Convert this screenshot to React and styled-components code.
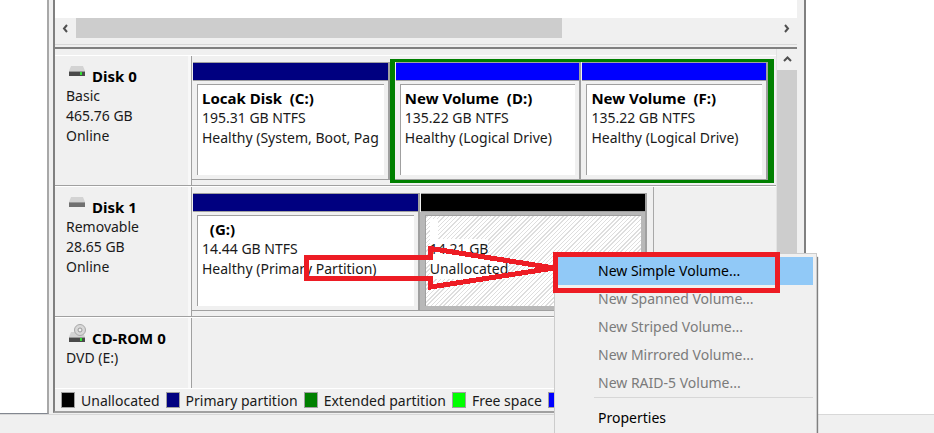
import React, { useState } from 'react';
import styled, { createGlobalStyle } from 'styled-components';

const GlobalStyle = createGlobalStyle`
    *{
        box-sizing: border-box;
    }
    body{
        margin: 0;
        background-color: white;
        color: #1a1a1a;
        font-family: "Noto Sans", "Open Sans", sans-serif;
        font-size: 14px;
        line-height: 20px;
    }
    button{
        padding: 0;
        border: 0;
        background: none;
        color: inherit;
        font: inherit;
    }
`;

const Page = styled.div`
    position: relative;
    display: flex;
    flex-direction: column;
    height: 100vh;
    overflow: hidden;
`;

const Main = styled.main`
    display: flex;
`;

const TreePane = styled.aside`
    flex: 0 0 49px;
    border-right: 2px solid #a8a8a8;
    border-bottom: 1px solid #828790;
`;

const ActionsPane = styled.aside`
    flex: 0 0 128px;
`;

const Console = styled.section`
    flex: 1;
    min-width: 0;
    padding: 0 7px 1px 4px;
    background-color: #f0f0f0;
    border-right: 2px solid #808080;
`;

const ConsoleInner = styled.div`
    border-left: 2px solid #808080;
    border-bottom: 2px solid #a0a0a0;
`;

const VolumeList = styled.div`
    height: 18px;
    background-color: white;
`;

const HorizontalScroll = styled.div`
    display: flex;
    height: 20px;
`;

const VerticalScroll = styled.div`
    display: flex;
    flex-direction: column;
    flex: 0 0 20px;
`;

const ScrollButton = styled.button`
    display: flex;
    align-items: center;
    justify-content: center;
    flex: 0 0 21px;
`;

const Track = styled.div`
    display: flex;
    flex: 1;
`;

const Thumb = styled.div`
    flex: ${props => props.$size};
    background-color: #cdcdcd;
`;

const Splitter = styled.div`
    height: 11px;
    border-bottom: 2px solid #808080;
    &::before{
        content: "";
        display: block;
        height: 6px;
        border-bottom: 1px solid #d8d8d8;
    }
`;

const DiskView = styled.div`
    display: flex;
`;

const DiskList = styled.div`
    flex: 1;
    min-width: 0;
    padding-top: 6px;
    border-right: 1px solid #e3e3e3;
`;

const DiskRow = styled.div`
    display: flex;
    min-height: ${props => props.$short ? 71 : 131}px;
    border-top: 1px solid white;
    border-bottom: ${props => props.$short ? 0 : 1}px solid #a0a0a0;
`;

const DiskLabel = styled.div`
    flex: 0 0 137px;
    padding: 10px 0 0 11px;
    border-right: 1px solid #a0a0a0;
    box-shadow: inset -3px 0 #f8f8f8;
`;

const DiskTitle = styled.div`
    display: flex;
    gap: 6px;
    color: black;
    font-size: 15px;
    font-weight: bold;
    svg{
        flex: none;
        margin: ${props => props.$disc ? -5 : -9}px 0 0 2px;
    }
`;

const Volumes = styled.div`
    display: flex;
    flex: ${props => props.$size || 1};
    min-width: 0;
    padding: ${props => props.$bounded ? '6px 6px 5px 0' : '6px 0 5px'};
    border-right: ${props => props.$bounded ? '1px solid #a8a8a8' : '0'};
`;

const Spacer = styled.div`
    flex: ${props => props.$size};
`;

const Extended = styled.div`
    display: flex;
    flex: ${props => props.$size};
    min-width: 0;
    margin: -3px 2px -3px 0;
    border: solid #008000;
    border-width: 3px 6px 3px 5px;
`;

const VolumeBox = styled.div`
    display: flex;
    flex-direction: column;
    flex: ${props => props.$size};
    min-width: 0;
    border-right: 2px solid #a0a0a0;
    border-bottom: 1px solid #a0a0a0;
`;

const Bar = styled.div`
    height: 19px;
    margin-left: 1px;
    background-color: ${props => props.$color};
    border: solid #a0a0a0;
    border-width: 1px 0;
`;

const VolumeBody = styled.div`
    flex: 1;
    padding: 4px 0 0 5px;
    overflow: hidden;
    white-space: nowrap;
    color: #1a1a1a;
    background: ${props => props.$hatched
        ? 'repeating-linear-gradient(135deg, white 0 2px, #dedede 2px 3px)'
        : 'white'};
    border: solid ${props => props.$hatched ? '#b8b8b8' : '#f0f0f0'};
    border-width: 3px 4px 4px 5px;
    box-shadow: inset 1px 1px #a0a0a0;
    span{
        display: inline-block;
        background-color: white;
    }
`;

const VolumeName = styled.div`
    height: 20px;
    color: black;
    font-size: 15px;
    font-weight: bold;
    white-space: pre;
`;

const Legend = styled.ul`
    display: flex;
    gap: 6px;
    height: 23px;
    margin: 0;
    padding: 2px 0 0 6px;
    list-style: none;
    border-top: 1px solid white;
    li{
        display: flex;
        gap: 6px;
        white-space: nowrap;
    }
`;

const Swatch = styled.span`
    width: 14px;
    height: 16px;
    margin-top: 1px;
    background-color: ${props => props.$color};
    border: 1px solid #a0a0a0;
`;

const StatusBar = styled.footer`
    flex: 1;
    background-color: #f0f0f0;
    border-top: 1px solid #d8d8d8;
`;

const ContextMenu = styled.div`
    position: absolute;
    left: 554px;
    top: 253px;
    display: flex;
    flex-direction: column;
    width: 263px;
    padding: 3px;
    background-color: #f0f0f0;
    border: 1px solid #cccccc;
    box-shadow: 1px 4px 1px #808080;
`;

const MenuItem = styled.button`
    height: 28px;
    padding-left: 40px;
    text-align: left;
    color: black;
    background-color: ${props => props.$active ? '#91c9f7' : 'transparent'};
    &:disabled{
        color: #7b7b7b;
    }
`;

const MenuDivider = styled.hr`
    width: 100%;
    margin: 0 0 6px;
    border: 0;
    padding-left: 36px;
    height: 1px;
    background-color: #d7d7d7;
    background-clip: content-box;
`;

const Annotation = styled.svg`
    position: absolute;
    left: 300px;
    top: 240px;
    pointer-events: none;
`;

const Chevron = ({ direction }) => {
    const paths = {
        left: 'M6 1 L3 4.500 L6 8',
        right: 'M3 1 L6 4.500 L3 8',
        up: 'M1 6 L4.500 2.500 L8 6',
    };
    return (
        <svg width="9" height="9" fill="none" stroke="#505050" strokeWidth="2">
            <path d={paths[direction]} />
        </svg>
    );
};

const DriveIcon = ({ light, disc }) => (
    <svg width="18" height="21" viewBox="0 0 18 21">
        <path d="M3 9 H15 L17 14 H1 Z" fill="#d3d3d3" />
        {disc && (
            <g>
                <circle cx="12" cy="7" r="5.500" fill="#d8d8d8" stroke="#a8a8a8" />
                <circle cx="12" cy="7" r="2" fill="#f0f0f0" stroke="#999999" />
            </g>
        )}
        <rect x="1" y="14" width="16" height="5" fill={light ? '#4a4a4a' : '#707070'} />
        <path d="M1 14.500 H17" stroke="#999999" />
        {light && <rect x="12" y="15" width="2" height="3" fill="#35e035" />}
    </svg>
);

const Volume = ({ size, color, name, info, status, hatched }) => (
    <VolumeBox $size={size}>
        <Bar $color={color} />
        <VolumeBody $hatched={hatched}>
            <VolumeName><span>{name}</span></VolumeName>
            <div><span>{info}</span></div>
            <div><span>{status}</span></div>
        </VolumeBody>
    </VolumeBox>
);

const Disk = ({ name, lines, light, disc, children }) => (
    <DiskRow $short={disc}>
        <DiskLabel>
            <DiskTitle $disc={disc}>
                <DriveIcon light={light} disc={disc} />
                {name}
            </DiskTitle>
            {lines.map(line => <div key={line}>{line}</div>)}
        </DiskLabel>
        {children}
    </DiskRow>
);

const legend = [
    { label: 'Unallocated', color: '#000000' },
    { label: 'Primary partition', color: '#000080' },
    { label: 'Extended partition', color: '#008000' },
    { label: 'Free space', color: '#00ff00' },
    { label: 'Logical drive', color: '#0000ff' },
];

const volumeActions = [
    { label: 'New Simple Volume...', enabled: true },
    { label: 'New Spanned Volume...' },
    { label: 'New Striped Volume...' },
    { label: 'New Mirrored Volume...' },
    { label: 'New RAID-5 Volume...' },
];

const App = () => {
    const [active, setActive] = useState('New Simple Volume...');

    return (
        <Page>
            <GlobalStyle />
            <Main>
                <TreePane />
                <Console>
                    <ConsoleInner>
                        <VolumeList />
                        <HorizontalScroll>
                            <ScrollButton aria-label="Scroll left"><Chevron direction="left" /></ScrollButton>
                            <Track>
                                <Thumb $size={486} />
                                <Spacer $size={214} />
                            </Track>
                            <ScrollButton aria-label="Scroll right"><Chevron direction="right" /></ScrollButton>
                        </HorizontalScroll>
                        <Splitter />
                        <DiskView>
                            <DiskList>
                                <Disk name="Disk 0" lines={['Basic', '465.76 GB', 'Online']} light>
                                    <Volumes>
                                        <Volume size={201} color="#000080" name="Locak Disk  (C:)"
                                            info="195.31 GB NTFS" status="Healthy (System, Boot, Pag" />
                                        <Extended $size={383}>
                                            <Volume size={1} color="#0000ff" name="New Volume  (D:)"
                                                info="135.22 GB NTFS" status="Healthy (Logical Drive)" />
                                            <Volume size={1} color="#0000ff" name="New Volume  (F:)"
                                                info="135.22 GB NTFS" status="Healthy (Logical Drive)" />
                                        </Extended>
                                    </Volumes>
                                </Disk>
                                <Disk name="Disk 1" lines={['Removable', '28.65 GB', 'Online']}>
                                    <Volumes $size={461} $bounded>
                                        <Volume size={1} color="#000080" name="  (G:)"
                                            info="14.44 GB NTFS" status="Healthy (Primary Partition)" />
                                        <Volume size={1} color="#000000" name="  " hatched
                                            info="14.21 GB" status="Unallocated" />
                                    </Volumes>
                                    <Spacer $size={123} />
                                </Disk>
                                <Disk name="CD-ROM 0" lines={['DVD (E:)']} light disc />
                            </DiskList>
                            <VerticalScroll>
                                <ScrollButton aria-label="Scroll up"><Chevron direction="up" /></ScrollButton>
                                <Thumb $size={1} />
                            </VerticalScroll>
                        </DiskView>
                        <Legend>
                            {legend.map(item => (
                                <li key={item.label}>
                                    <Swatch $color={item.color} />
                                    {item.label}
                                </li>
                            ))}
                        </Legend>
                    </ConsoleInner>
                </Console>
                <ActionsPane />
            </Main>
            <StatusBar />
            <ContextMenu role="menu">
                {volumeActions.map(action => (
                    <MenuItem
                        key={action.label}
                        role="menuitem"
                        disabled={!action.enabled}
                        $active={active === action.label}
                        onMouseEnter={() => setActive(action.label)}
                    >
                        {action.label}
                    </MenuItem>
                ))}
                <MenuDivider />
                <MenuItem
                    role="menuitem"
                    $active={active === 'Properties'}
                    onMouseEnter={() => setActive('Properties')}
                >
                    Properties
                </MenuItem>
            </ContextMenu>
            <Annotation width="482" height="60" fill="none" stroke="#ed1c24" shapeRendering="crispEdges">
                <path d="M6 17.500 H130.500 V8.500 L254 28 L130.500 47 V38.500 H6 Z" strokeWidth="5" />
                <rect x="255.500" y="14.500" width="222" height="36" strokeWidth="5" />
            </Annotation>
        </Page>
    );
};

export default App;
